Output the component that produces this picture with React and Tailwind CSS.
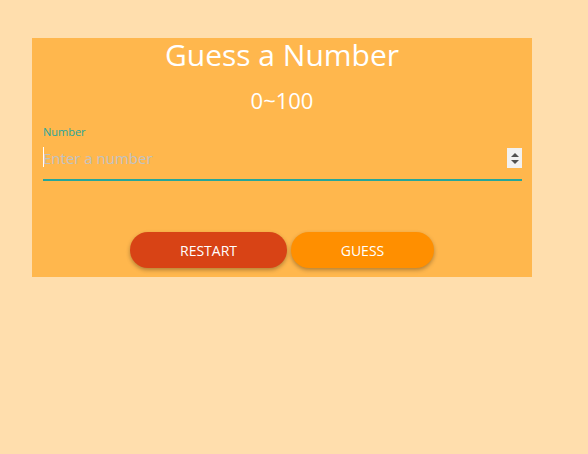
export default function App() {
  return (
    <div className="min-h-[454px] w-full bg-[#ffdead] pt-[38px] font-['Open_Sans',sans-serif]">
      {/* Game panel */}
      <div className="ml-[32px] flex w-[500px] flex-col bg-[#ffb74d] pt-px pb-[9px]">
        <h1 className="text-center text-[30px] leading-[32px] font-normal text-white">
          Guess a Number
        </h1>
        <p className="mt-[17px] text-center text-[22px] leading-[24px] text-white">0~100</p>

        {/* Number field */}
        <div className="mt-[14px] pl-[11px] pr-[10px]">
          <label className="block text-[11px] leading-[12px] text-[#26a69a]">Number</label>
          <div className="mt-[8px] border-b-2 border-[#26a69a] pb-[9px]">
            <div className="relative flex h-[24px] items-center">
              <span className="absolute left-0 top-[1px] h-[20px] w-px bg-white" />
              <input
                type="text"
                placeholder="Enter a number"
                className="h-[24px] flex-1 bg-transparent p-0 text-[15px] leading-[24px] text-white outline-none placeholder:text-[#c2c2c2]"
              />
              <div className="flex h-[20px] w-[15px] flex-col items-center justify-center gap-[3px] bg-[#f1f1f1]">
                <svg width="8" height="4" viewBox="0 0 8 4">
                  <path d="M0 4 L4 0 L8 4 Z" fill="#505050" />
                </svg>
                <svg width="8" height="4" viewBox="0 0 8 4">
                  <path d="M0 0 L8 0 L4 4 Z" fill="#505050" />
                </svg>
              </div>
            </div>
          </div>
        </div>

        {/* Actions */}
        <div className="mt-[51px] flex justify-center gap-[4px]">
          <button className="h-[36px] w-[157px] rounded-[18px] bg-[#d84315] text-[14px] uppercase text-white shadow-[0_2px_4px_rgba(0,0,0,0.3)]">
            Restart
          </button>
          <button className="h-[36px] w-[143px] rounded-[18px] bg-[#ff8f00] text-[14px] uppercase text-white shadow-[0_2px_4px_rgba(0,0,0,0.3)]">
            Guess
          </button>
        </div>
      </div>
    </div>
  )
}
